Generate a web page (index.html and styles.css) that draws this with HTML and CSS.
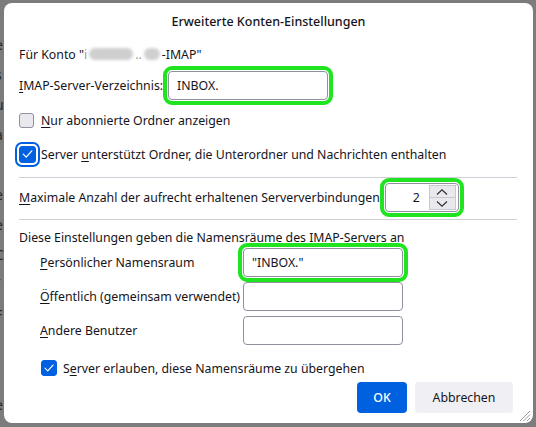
FILE: index.html
```html
<!DOCTYPE html>
<html lang="de">
<head>
<meta charset="utf-8">
<title>Erweiterte Konten-Einstellungen</title>
<link rel="stylesheet" href="styles.css">
</head>
<body>
<div class="desk" aria-hidden="true">
  <span>e</span><span>s</span><span>u</span><span>a</span><span>&nbsp;</span><span>e</span><span>e</span><span>C</span><span>f</span><span>F</span><span>&nbsp;</span><span>&nbsp;</span><span>e</span>
</div>
<div class="dialog">
  <h1 class="title">Erweiterte Konten-Einstellungen</h1>

  <p class="account">Für Konto "<span class="faint">i</span><span class="smear"></span><span class="faint">..</span><span class="smear short"></span>-IMAP"</p>

  <div class="field-row">
    <label class="label"><u>I</u>MAP-Server-Verzeichnis:</label>
    <input class="text-input hl dir" type="text" value="INBOX.">
  </div>

  <div class="check-row first">
    <span class="box"></span>
    <span><u>N</u>ur abonnierte Ordner anzeigen</span>
  </div>
  <div class="check-row second">
    <span class="box checked focused">
      <svg viewBox="0 0 16 16" width="16" height="16"><path d="M3.5 8.2 6.6 11.3 12.6 4.6" fill="none" stroke="#fff" stroke-width="1.3" stroke-linecap="round" stroke-linejoin="round"/></svg>
    </span>
    <span>Server <u>u</u>nterstützt Ordner, die Unterordner und Nachrichten enthalten</span>
  </div>

  <hr class="sep top">

  <div class="field-row conn">
    <label class="label"><u>M</u>aximale Anzahl der aufrecht erhaltenen Serververbindungen</label>
    <div class="spinner hl">
      <span class="spin-value">2</span>
      <span class="spin-buttons">
        <span class="spin-btn"><svg viewBox="0 0 14 8" width="14" height="8"><path d="M2 6.5 7 1.8 12 6.5" fill="none" stroke="#2b2a33" stroke-width="1.1"/></svg></span>
        <span class="spin-btn"><svg viewBox="0 0 14 8" width="14" height="8"><path d="M2 1.5 7 6.2 12 1.5" fill="none" stroke="#2b2a33" stroke-width="1.1"/></svg></span>
      </span>
    </div>
  </div>

  <hr class="sep bottom">

  <p class="ns-intro">Diese Einstellungen geben die Namensräume des IMAP-Servers an</p>

  <div class="ns-grid">
    <label class="label"><u>P</u>ersönlicher Namensraum</label>
    <input class="text-input hl" type="text" value="&quot;INBOX.&quot;">
    <label class="label"><u>Ö</u>ffentlich (gemeinsam verwendet)</label>
    <input class="text-input" type="text" value="">
    <label class="label"><u>A</u>ndere Benutzer</label>
    <input class="text-input" type="text" value="">
  </div>

  <div class="check-row third">
    <span class="box checked small">
      <svg viewBox="0 0 16 16" width="16" height="16"><path d="M3.5 8.2 6.6 11.3 12.6 4.6" fill="none" stroke="#fff" stroke-width="1.3" stroke-linecap="round" stroke-linejoin="round"/></svg>
    </span>
    <span>S<u>e</u>rver erlauben, diese Namensräume zu übergehen</span>
  </div>

  <div class="actions">
    <button class="btn primary">OK</button>
    <button class="btn cancel">Abbrechen</button>
  </div>

  <svg class="grip" viewBox="0 0 14 14" width="14" height="14"><path d="M13 3 3 13M13 6.5 6.5 13M13 10 10 13" stroke="#9a9a9a" stroke-width="1"/></svg>
</div>
</body>
</html>
```
FILE: styles.css
```css
* { box-sizing: border-box; }

html, body {
  margin: 0;
  height: 100%;
}

body {
  background: #7c7c7c;
  padding: 3px 3px 4px 4px;
  font-family: "Noto Sans", "Open Sans", sans-serif;
  font-size: 12.3px;
  color: #15141a;
  overflow: hidden;
  position: relative;
}

/* window content peeking out to the left of the dialog */
.desk {
  position: absolute;
  left: -5px;
  top: 30px;
  display: flex;
  flex-direction: column;
  font-size: 14px;
  line-height: 30px;
  color: #2a2a2a;
}

.dialog {
  position: relative;
  width: 529px;
  height: 420px;
  background: #fff;
  border-radius: 8px;
  padding: 0 15px;
  display: flex;
  flex-direction: column;
}

.title {
  margin: 9px 0 0;
  font-size: 12.5px;
  font-weight: 500;
  line-height: 20px;
  text-align: center;
}

.account {
  margin: 13px 0 0;
  line-height: 20px;
}

.faint { color: #9a9a9a; }

.smear {
  display: inline-block;
  width: 44px;
  height: 12px;
  margin: 0 2px;
  vertical-align: -1px;
  background: #cfcfcf;
  border-radius: 6px;
  filter: blur(1.5px);
}
.smear.short { width: 16px; }

u { text-decoration-thickness: 1px; text-underline-offset: 2px; }

.field-row {
  display: flex;
  align-items: center;
  margin-top: 6px;
  height: 29px;
}

.label { white-space: nowrap; }

.text-input {
  height: 29px;
  width: 160px;
  border: 1px solid #8f8f9d;
  border-radius: 4px;
  padding: 0 8px;
  font: inherit;
  color: #15141a;
  background: #fff;
}
.text-input.dir { margin-left: 5px; }

/* green highlight frame */
.hl {
  outline: 4px solid #1fe41f;
  outline-offset: 1px;
}

.check-row {
  display: flex;
  align-items: center;
  gap: 7px;
  height: 20px;
}
.check-row.first { margin-top: 10px; }
.check-row.second { margin-top: 14px; gap: 5px; }
.check-row.third { margin-top: 15px; padding-left: 22px; gap: 6px; height: 16px; }

.box {
  width: 15px;
  height: 15px;
  flex: none;
  border: 1px solid #8f8f9d;
  border-radius: 3px;
  background: #e9e9ed;
  display: flex;
  align-items: center;
  justify-content: center;
}
.box.checked {
  background: #0061e0;
  border-color: #0061e0;
}
.box.checked.focused {
  width: 17px;
  height: 17px;
  outline: 2px solid #0061e0;
  outline-offset: 2px;
}
.box.small { width: 16px; height: 16px; }

.sep {
  margin: 13px 0 0;
  border: none;
  border-top: 1px solid #cfcfd8;
  width: 498px;
  align-self: flex-start;
}
.sep.bottom { margin-top: 7px; }

.field-row.conn { margin-top: 5px; }
.conn .label { margin-right: 5px; }

.spinner {
  width: 74px;
  height: 29px;
  border: 1px solid #8f8f9d;
  border-radius: 4px;
  display: flex;
  align-items: center;
  padding: 0 2px 0 0;
}
.spin-value {
  flex: 1;
  text-align: right;
  padding-right: 9px;
}
.spin-buttons {
  display: flex;
  flex-direction: column;
  width: 27px;
  height: 25px;
}
.spin-btn {
  flex: 1;
  background: #e9e9ed;
  border: 1px solid #c8c8d0;
  display: flex;
  align-items: center;
  justify-content: center;
}
.spin-btn + .spin-btn { border-top: none; }

.ns-intro {
  margin: 9px 0 0;
  line-height: 18px;
}

.ns-grid {
  display: grid;
  grid-template-columns: 203px 160px;
  grid-auto-rows: 29px;
  row-gap: 5px;
  align-items: center;
  padding-left: 21px;
  margin-top: 1px;
}

.actions {
  display: flex;
  justify-content: flex-end;
  gap: 8px;
  margin-top: 6px;
  padding-right: 5px;
}

.btn {
  height: 31px;
  border: none;
  border-radius: 4px;
  background: #f0f0f4;
  color: #15141a;
  font: inherit;
  padding: 0;
  width: 50px;
}
.btn.cancel { width: 98px; }
.btn.primary {
  background: #0061e0;
  color: #fff;
  font-weight: 500;
}

.grip {
  position: absolute;
  right: 2px;
  bottom: 1px;
}
```
